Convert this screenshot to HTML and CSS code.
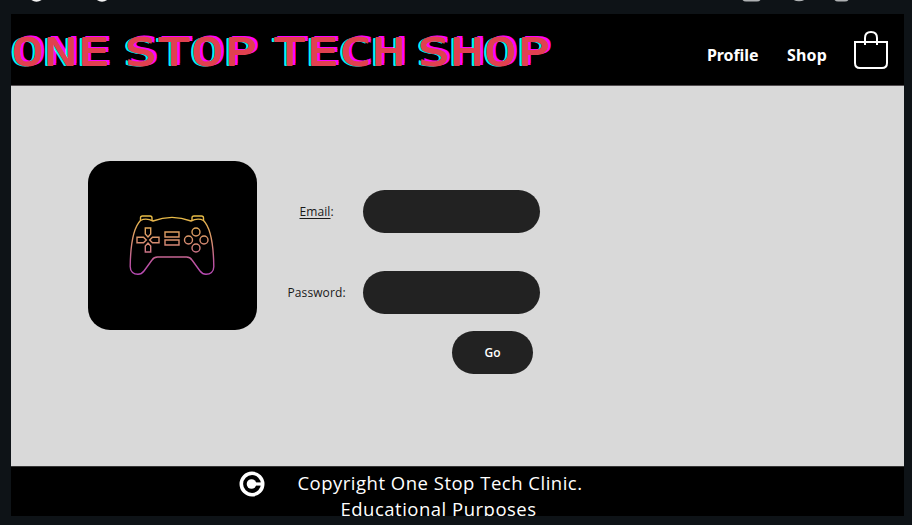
FILE: index.html
```html
<!DOCTYPE html>
<html lang="en">
<head>
<meta charset="utf-8">
<title>One Stop Tech Shop</title>
<link rel="stylesheet" href="styles.css">
</head>
<body>
<div class="toolbar">
  <svg width="912" height="14" aria-hidden="true">
    <g fill="none" stroke="#f4f4f4" stroke-width="2.4">
      <path d="M32-1Q36.500 2 41-1M97.500-1Q102 2 106.500-1"/>
    </g>
    <g fill="none" stroke="#aeb1b3" stroke-width="2">
      <path d="M743-1Q744 .5 746 .5H757Q759 .5 760-1M794-1Q796 .3 799 .3T804-1M835-1Q836 .5 838 .5H845Q847 .5 848-1"/>
    </g>
  </svg>
</div>
<div class="page">
  <header class="header">
    <h1 class="brand">
      <svg class="brand-text" width="545" height="46" viewBox="0 0 545 46">
        <text x="0" y="36.500" textLength="99" lengthAdjust="spacingAndGlyphs">ONE</text>
        <text x="113" y="36.500" textLength="133" lengthAdjust="spacingAndGlyphs">STOP</text>
        <text x="262" y="36.500" textLength="132" lengthAdjust="spacingAndGlyphs">TECH</text>
        <text x="406" y="36.500" textLength="133" lengthAdjust="spacingAndGlyphs">SHOP</text>
      </svg>
    </h1>
    <nav class="nav">
      <a class="profile">Profile</a>
      <a class="shop">Shop</a>
      <svg class="bag" width="36" height="40" viewBox="0 0 36 40" fill="none" stroke="#fff" stroke-width="2">
        <path d="M2 12H34V33Q34 38 29 38H7Q2 38 2 33Z"/>
        <path d="M12 15V8Q12 2 18 2T24 8V15"/>
      </svg>
    </nav>
  </header>
  <main class="main">
    <div class="logo">
      <svg width="88" height="64" viewBox="0 0 88 64" fill="none" stroke="url(#sunset)" stroke-width="1.4">
        <defs>
          <linearGradient id="sunset" gradientUnits="userSpaceOnUse" x1="0" y1="2" x2="0" y2="60">
            <stop offset="0" stop-color="#e8bd45"/>
            <stop offset=".5" stop-color="#d68876"/>
            <stop offset=".8" stop-color="#bd54a0"/>
            <stop offset="1" stop-color="#b94bb5"/>
          </linearGradient>
        </defs>
        <path d="M25 7Q44-.3 63 7Q70 3.500 75.500 6.500C83 14 85.500 33 85.800 52C86 58.500 82 60.300 78 60.300C75 60.300 73.500 59 72 57L64 46Q62 43 58.500 43H29.500Q26 43 24 46L16 57C14.500 59 13 60.300 10 60.300C6 60.300 2 58.500 2.200 52C2.500 33 5 14 12.500 6.500Q18 3.500 25 7Z"/>
        <path d="M12.500 6.500V4Q12.500 2 14.500 2H22Q24 2 24 4V6.500M64 6.500V4Q64 2 66 2H73.500Q75.500 2 75.500 4V6.500"/>
        <path d="M17.300 14H22.700V20L20 23L17.300 20ZM17.300 38H22.700V32L20 29L17.300 32ZM9 23.300H15.500L18.300 26L15.500 28.700H9ZM31 23.300H24.500L21.700 26L24.500 28.700H31Z"/>
        <path d="M37 18H51V23H37ZM37 26H51V31H37Z"/>
        <circle cx="68" cy="18" r="4"/><circle cx="68" cy="34" r="4"/>
        <circle cx="60.500" cy="26" r="4"/><circle cx="76" cy="26" r="4"/>
      </svg>
    </div>
    <form class="form">
      <div class="row">
        <label for="email" class="email-label"><u>Email</u>:</label>
        <input id="email" type="email">
      </div>
      <div class="row">
        <label for="password" class="password-label">Password:</label>
        <input id="password" type="password">
      </div>
      <button type="button">Go</button>
    </form>
  </main>
  <footer class="footer">
    <svg class="copyright" width="26" height="26" viewBox="0 0 26 26" fill="none" stroke="#fff">
      <circle cx="13" cy="13" r="10.700" stroke-width="3.600"/>
      <circle cx="12.500" cy="13" r="4.800" fill="#fff" stroke="none"/>
      <path d="M13 13H22" stroke-width="3.200"/>
    </svg>
    <p>Copyright One Stop Tech Clinic.<br><span class="purpose">Educational Purposes</span></p>
  </footer>
</div>
</body>
</html>
```
FILE: styles.css
```css
* { box-sizing: border-box; }
body {
  margin: 0;
  height: 525px;
  overflow: hidden;
  background: #0e1317;
  font-family: "Open Sans", sans-serif;
}
.toolbar { height: 14px; }
.toolbar svg { display: block; }
.page {
  width: 893px;
  height: 502px;
  margin-left: 11px;
  overflow: hidden;
  background: #d9d9d9;
}
.header {
  display: flex;
  justify-content: space-between;
  height: 72px;
  background: #000;
  border-bottom: 1px solid #514c4f;
}
.brand { margin: 14px 0 0; font-size: 16px; line-height: 1; }
.brand-text {
  display: block;
  overflow: visible;
  fill: #e1404f;
  font: 400 38px "DejaVu Sans Mono", monospace;
  text-shadow:
    0 -1px 0 #e1404f, 0 1px 0 #e1404f, .6px 0 0 #e1404f,
    -1.5px 1.5px 0 #00f7f7, -1.5px 0 0 #00f7f7,
    2px -1.500px 0 #f0f, 2px 0 0 #f0f;
}
.nav {
  display: flex;
  align-items: flex-start;
  padding: 16px 15px 0 0;
  color: #fff;
  font: 700 16px/24px "Noto Sans", sans-serif;
}
.nav a { margin-top: 13px; white-space: nowrap; }
.profile { width: 51px; margin-right: 29px; letter-spacing: -.1px; }
.shop { width: 41px; margin-right: 25px; letter-spacing: .15px; }
.bag { display: block; }
.main {
  display: flex;
  height: 380px;
  padding: 75px 0 0 77px;
}
.logo {
  display: flex;
  align-items: center;
  justify-content: center;
  width: 169px;
  height: 169px;
  border-radius: 22px;
  background: #000;
}
.logo svg { margin-right: 1px; }
.form {
  display: flex;
  flex-direction: column;
  width: 283px;
  padding-top: 29px;
}
.row {
  display: flex;
  align-items: center;
  justify-content: space-between;
  height: 43px;
  margin-bottom: 38px;
}
.row + .row { margin-bottom: 17px; }
label {
  width: 106px;
  padding-left: 30.500px;
  color: #191919;
  font-size: 12px;
  line-height: 20px;
  letter-spacing: .1px;
  white-space: nowrap;
}
.email-label { padding-left: 42.500px; }
u { text-underline-offset: 2px; }
input {
  width: 177px;
  height: 43px;
  padding: 0 20px;
  border: 0;
  border-radius: 22px;
  outline: 0;
  background: #222;
  color: #fff;
}
button {
  align-self: flex-end;
  width: 81px;
  height: 43px;
  margin-right: 7px;
  padding: 0;
  border: 0;
  border-radius: 22px;
  background: #222;
  color: #fff;
  font: 600 12px "Open Sans", sans-serif;
}
.footer {
  display: flex;
  height: 50px;
  padding: 4px 0 0 228px;
  overflow: hidden;
  border-top: 1px solid #363636;
  background: #000;
  color: #fff;
}
.copyright { flex: none; }
p {
  width: 290px;
  margin: -1px 0 0 30px;
  font-size: 18.500px;
  line-height: 26px;
  letter-spacing: .5px;
  text-align: center;
  white-space: nowrap;
}
.purpose { margin-right: 3px; }
```
